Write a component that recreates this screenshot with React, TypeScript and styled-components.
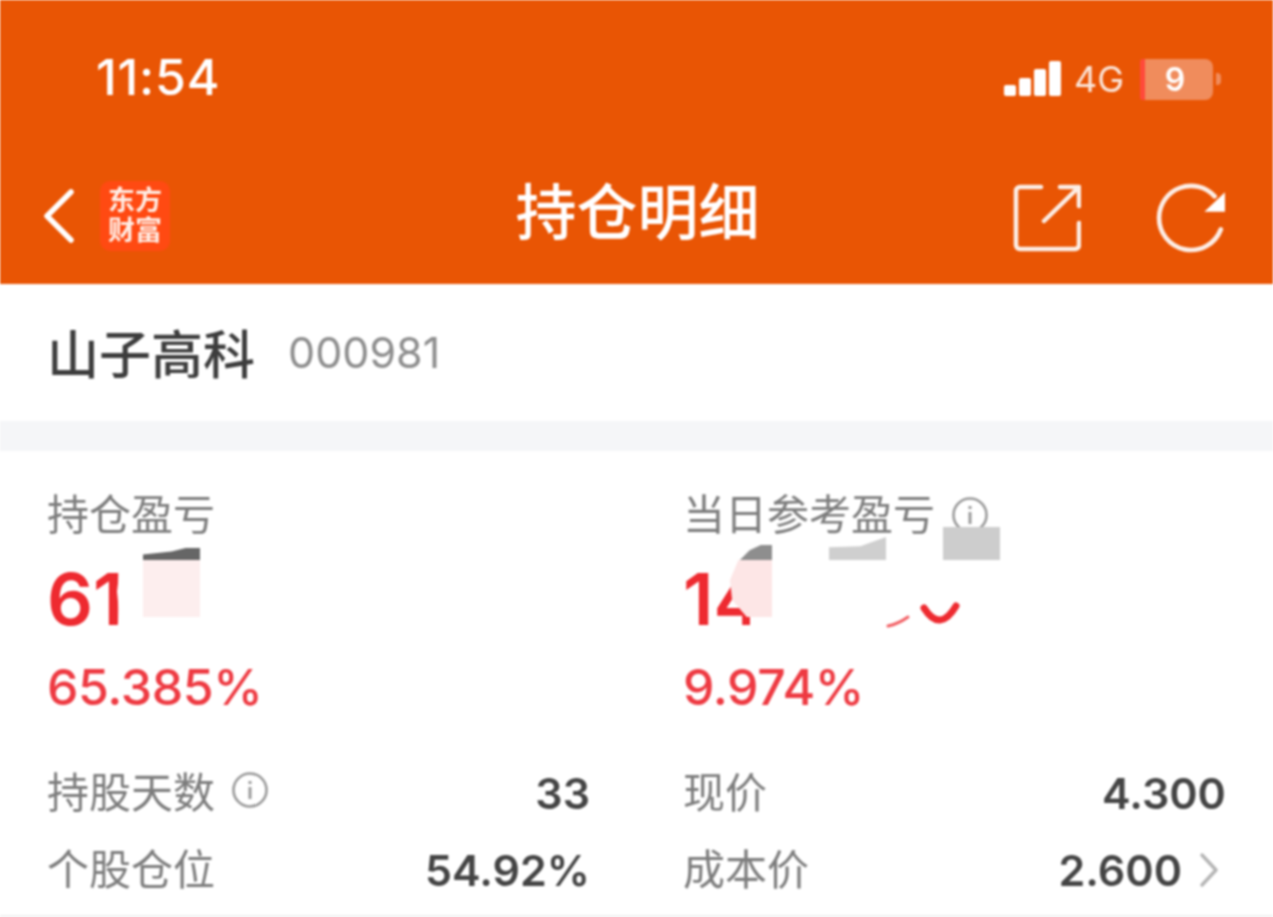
import React from 'react'
import styled, {createGlobalStyle} from "styled-components";

const GlobalStyle = createGlobalStyle`
    html, body {
        margin: 0;
        padding: 0;
        background: #fff;
    }
    body {
        font-family: Inter, "Noto Sans CJK SC", sans-serif;
    }
`;

function InfoIcon({size}: {size: number}) {
    return (
        <svg width={size} height={size} viewBox="0 0 38 38" fill="none" stroke="#9a9a9a">
            <circle cx="19" cy="19" r="16.5" strokeWidth="2.6"/>
            <path d="M19 16v12" strokeWidth="3"/>
            <path d="M19 10v3" strokeWidth="3"/>
        </svg>
    )
}

function SignalIcon() {
    return (
        <svg width="58" height="38" viewBox="0 0 58 38" fill="#fff">
            <rect x="0" y="25" width="12" height="11" rx="2"/>
            <rect x="15" y="18" width="12" height="18" rx="2"/>
            <rect x="30" y="9" width="12" height="27" rx="2"/>
            <rect x="45" y="1" width="12" height="35" rx="2"/>
        </svg>
    )
}

function ShareIcon() {
    return (
        <svg width="68" height="68" viewBox="0 0 68 68" fill="none" stroke="#fff" strokeWidth="4.5" strokeLinecap="round" strokeLinejoin="round" opacity="0.9">
            <path d="M28 3H7a4 4 0 0 0-4 4v54a4 4 0 0 0 4 4h55a4 4 0 0 0 4-4V39"/>
            <path d="M31 37L65 4"/>
            <path d="M47 3h19v19"/>
        </svg>
    )
}

function RefreshIcon() {
    return (
        <svg width="72" height="72" viewBox="0 0 70 70" fill="none">
            <path d="M58 14A31 31 0 0 0 4 34a31 31 0 0 0 60 12" stroke="#fff" strokeWidth="4.5" strokeLinecap="round" opacity="0.9"/>
            <path d="M68 10v19H48z" fill="#fff"/>
        </svg>
    )
}

function BackIcon() {
    return (
        <svg width="34" height="56" viewBox="0 0 34 56" fill="none" stroke="#fff" strokeWidth="5.5" strokeLinecap="round" strokeLinejoin="round">
            <path d="M29 4L5 28l24 24"/>
        </svg>
    )
}

function ChevronIcon() {
    return (
        <svg width="20" height="36" viewBox="0 0 20 36" fill="none" stroke="#b5b5b5" strokeWidth="3.5" strokeLinecap="round" strokeLinejoin="round">
            <path d="M3 3l14 15L3 33"/>
        </svg>
    )
}

export default function App() {
    return (
        <>
            <GlobalStyle/>
            <Page>
                <Header>
                    <StatusBar>
                        <Clock>11:54</Clock>
                        <StatusRight>
                            <SignalIcon/>
                            <Network>4G</Network>
                            <Battery>
                                <BatteryBody>9</BatteryBody>
                                <BatteryNub/>
                            </Battery>
                        </StatusRight>
                    </StatusBar>
                    <NavBar>
                        <NavLeft>
                            <BackIcon/>
                            <Logo>东方<br/>财富</Logo>
                        </NavLeft>
                        <Title>持仓明细</Title>
                        <NavRight>
                            <ShareIcon/>
                            <RefreshIcon/>
                        </NavRight>
                    </NavBar>
                </Header>
                <StockRow>
                    <StockName>山子高科</StockName>
                    <StockCode>000981</StockCode>
                </StockRow>
                <Divider/>
                <Card>
                    <Summary>
                        <SummaryCell>
                            <Label>持仓盈亏</Label>
                            <BigValue>61</BigValue>
                            <Percent>65.385%</Percent>
                            <Patch $x={70} $y={78} $w={60} $h={70} $bg="#fff" $clip="polygon(5% 0, 100% 0, 100% 100%, 0 100%, 3% 60%, 0 35%)"/>
                            <Patch $x={96} $y={59} $w={57} $h={12} $bg="#666" $clip="polygon(0 55%, 50% 30%, 75% 0, 100% 0, 100% 100%, 0 100%)"/>
                            <Patch $x={96} $y={71} $w={57} $h={57} $bg="#fdeeee"/>
                        </SummaryCell>
                        <SummaryCell>
                            <Label>当日参考盈亏 <InfoWrap><InfoIcon size={38}/></InfoWrap></Label>
                            <BigValue>14</BigValue>
                            <Percent>9.974%</Percent>
                            <Patch $x={89} $y={71} $w={240} $h={72} $bg="#fff"/>
                            <Patch $x={67} $y={128} $w={30} $h={15} $bg="#fff"/>
                            <Patch $x={57} $y={56} $w={32} $h={15} $bg="#8e8e8e" $clip="polygon(0 100%, 30% 35%, 65% 0, 100% 0, 100% 100%)"/>
                            <Patch $x={47} $y={71} $w={42} $h={57} $bg="#fde6e6" $clip="polygon(20% 0, 100% 0, 100% 100%, 40% 100%, 5% 70%, 0 35%)"/>
                            <Patch $x={146} $y={48} $w={57} $h={23} $bg="#cfcfcf" $clip="polygon(0 45%, 55% 40%, 100% 0, 100% 100%, 0 100%)"/>
                            <Patch $x={260} $y={38} $w={57} $h={33} $bg="#cdcdcd"/>
                            <Arcs width="84" height="30" viewBox="0 0 84 30" fill="none" stroke="#ee2a30" strokeLinecap="round">
                                <path d="M8 26Q18 24 28 17" strokeWidth="3" opacity="0.75"/>
                                <path d="M44 8Q60 33 76 6" strokeWidth="7"/>
                            </Arcs>
                        </SummaryCell>
                    </Summary>
                    <Details>
                        <DetailRow>
                            <DetailLabel>持股天数 <InfoIcon size={38}/></DetailLabel>
                            <DetailValue>33</DetailValue>
                        </DetailRow>
                        <DetailRow>
                            <DetailLabel>现价</DetailLabel>
                            <DetailValue>4.300</DetailValue>
                        </DetailRow>
                        <DetailRow>
                            <DetailLabel>个股仓位</DetailLabel>
                            <DetailValue>54.92%</DetailValue>
                        </DetailRow>
                        <DetailRow>
                            <DetailLabel>成本价</DetailLabel>
                            <DetailValue>2.600 <ChevronWrap><ChevronIcon/></ChevronWrap></DetailValue>
                        </DetailRow>
                    </Details>
                </Card>
            </Page>
        </>
    )
}

const Page = styled.div`
    width: 1273px;
    height: 917px;
    overflow: hidden;
    background: #fff;
    filter: blur(0.8px);
`;

const Header = styled.header`
    height: 284px;
    background: #e95504;
    color: #fff;
`;

const StatusBar = styled.div`
    height: 155px;
    box-sizing: border-box;
    padding: 50px 52px 0 96px;
    display: flex;
    justify-content: space-between;
    align-items: flex-start;
`;

const Clock = styled.div`
    font-size: 50px;
    line-height: 54px;
    font-weight: 500;
    letter-spacing: 0.8px;
`;

const StatusRight = styled.div`
    display: flex;
    align-items: center;
    height: 58px;
`;

const Network = styled.span`
    font-size: 36px;
    font-weight: 400;
    margin: 0 16px 0 12px;
    opacity: 0.85;
`;

const Battery = styled.div`
    display: flex;
    align-items: center;
    gap: 3px;
`;

const BatteryBody = styled.div`
    width: 73px;
    height: 41px;
    box-sizing: border-box;
    padding-right: 8px;
    border-left: 5px solid #ff4a3a;
    border-radius: 3px 8px 8px 3px;
    background: #f08c5c;
    display: flex;
    align-items: center;
    justify-content: center;
    font-size: 32px;
    font-weight: 600;
`;

const BatteryNub = styled.div`
    width: 5px;
    height: 12px;
    border-radius: 0 4px 4px 0;
    background: #f08c5c;
`;

const NavBar = styled.nav`
    height: 129px;
    box-sizing: border-box;
    padding: 0 46px 0 42px;
    display: grid;
    grid-template-columns: 1fr auto 1fr;
    align-items: start;
`;

const NavLeft = styled.div`
    display: flex;
    align-items: center;
    gap: 24px;
    margin-top: 26px;
`;

const Logo = styled.div`
    width: 70px;
    height: 70px;
    border-radius: 10px;
    background: #ff4a12;
    font-size: 27px;
    line-height: 30px;
    font-weight: 700;
    text-align: center;
    padding-top: 5px;
    box-sizing: border-box;
    color: #ffeee6;
`;

const Title = styled.h1`
    margin: 20px 0 0 6px;
    text-align: center;
    font-size: 61px;
    line-height: 76px;
    font-weight: 500;
`;

const NavRight = styled.div`
    display: flex;
    align-items: center;
    justify-content: flex-end;
    gap: 74px;
    margin-top: 27px;
`;

const StockRow = styled.section`
    height: 137px;
    box-sizing: border-box;
    padding: 0 47px 2px;
    display: flex;
    align-items: center;
    gap: 33px;
`;

const StockName = styled.div`
    font-size: 52px;
    font-weight: 500;
    color: #3d3d3d;
`;

const StockCode = styled.div`
    font-size: 43px;
    font-weight: 400;
    color: #8e8e8e;
`;

const Divider = styled.div`
    height: 30px;
    background: #f5f6f8;
`;

const Card = styled.section`
    height: 466px;
    box-sizing: border-box;
    padding: 38px 47px 0 47px;
    border-bottom: 2px solid #f0f0f0;
`;

const Summary = styled.div`
    display: grid;
    grid-template-columns: 543px 1fr;
    column-gap: 93px;
`;

const SummaryCell = styled.div`
    position: relative;
    height: 262px;
`;

const Label = styled.div`
    font-size: 42px;
    line-height: 52px;
    color: #7d7d7d;
    display: flex;
    align-items: center;
    gap: 4px;
    white-space: pre;
`;

const InfoWrap = styled.span`
    display: inline-flex;
`;

const BigValue = styled.div`
    margin-top: 20px;
    font-size: 72px;
    line-height: 76px;
    font-weight: 600;
    color: #ee2a30;
`;

const Percent = styled.div`
    margin-top: 23px;
    font-size: 50px;
    line-height: 54px;
    font-weight: 500;
    letter-spacing: -0.4px;
    color: #ee3a42;
`;

const Patch = styled.div<{$x: number; $y: number; $w: number; $h: number; $bg: string; $clip?: string}>`
    position: absolute;
    left: ${p => p.$x}px;
    top: ${p => p.$y}px;
    width: ${p => p.$w}px;
    height: ${p => p.$h}px;
    background: ${p => p.$bg};
    clip-path: ${p => p.$clip || "none"};
`;

const Arcs = styled.svg`
    position: absolute;
    left: 197px;
    top: 111px;
`;

const Details = styled.div`
    display: grid;
    grid-template-columns: 543px 1fr;
    column-gap: 93px;
    grid-auto-rows: 77px;
`;

const DetailRow = styled.div`
    display: flex;
    justify-content: space-between;
    align-items: center;
`;

const DetailLabel = styled.div`
    font-size: 42px;
    color: #7d7d7d;
    display: flex;
    align-items: center;
    gap: 16px;
`;

const DetailValue = styled.div`
    font-size: 43px;
    font-weight: 600;
    color: #444;
    display: flex;
    align-items: center;
    gap: 17px;
    padding-top: 7px;
`;

const ChevronWrap = styled.span`
    display: inline-flex;
    margin-right: 7px;
`;
